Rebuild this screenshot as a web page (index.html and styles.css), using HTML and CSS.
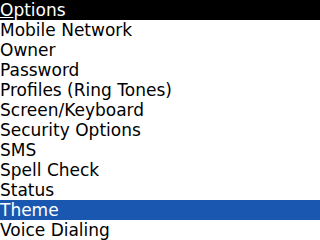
FILE: index.html
```html
<!DOCTYPE html>
<html>
<head>
<meta charset="utf-8">
<link rel="stylesheet" href="styles.css">
</head>
<body>
<div class="screen">
  <div class="title"><span class="ul">O</span>ptions</div>
  <div class="item">Mobile Network</div>
  <div class="item">Owner</div>
  <div class="item">Password</div>
  <div class="item">Profiles (Ring Tones)</div>
  <div class="item">Screen/Keyboard</div>
  <div class="item">Security Options</div>
  <div class="item">SMS</div>
  <div class="item">Spell Check</div>
  <div class="item">Status</div>
  <div class="item selected">Theme</div>
  <div class="item">Voice Dialing</div>
</div>
</body>
</html>
```
FILE: styles.css
```css
html, body {
  margin: 0;
  padding: 0;
  background: #ffffff;
}
.screen {
  width: 320px;
  height: 240px;
  overflow: hidden;
  font-family: "DejaVu Sans", sans-serif;
  font-size: 17px;
  color: #000000;
}
.title, .item {
  height: 20px;
  line-height: 20px;
  padding-left: 0;
  white-space: nowrap;
}
.title {
  background: #000000;
  color: #ffffff;
}
.ul {
  text-decoration: underline;
}
.selected {
  background: #1a57b1;
  color: #ffffff;
}
```
